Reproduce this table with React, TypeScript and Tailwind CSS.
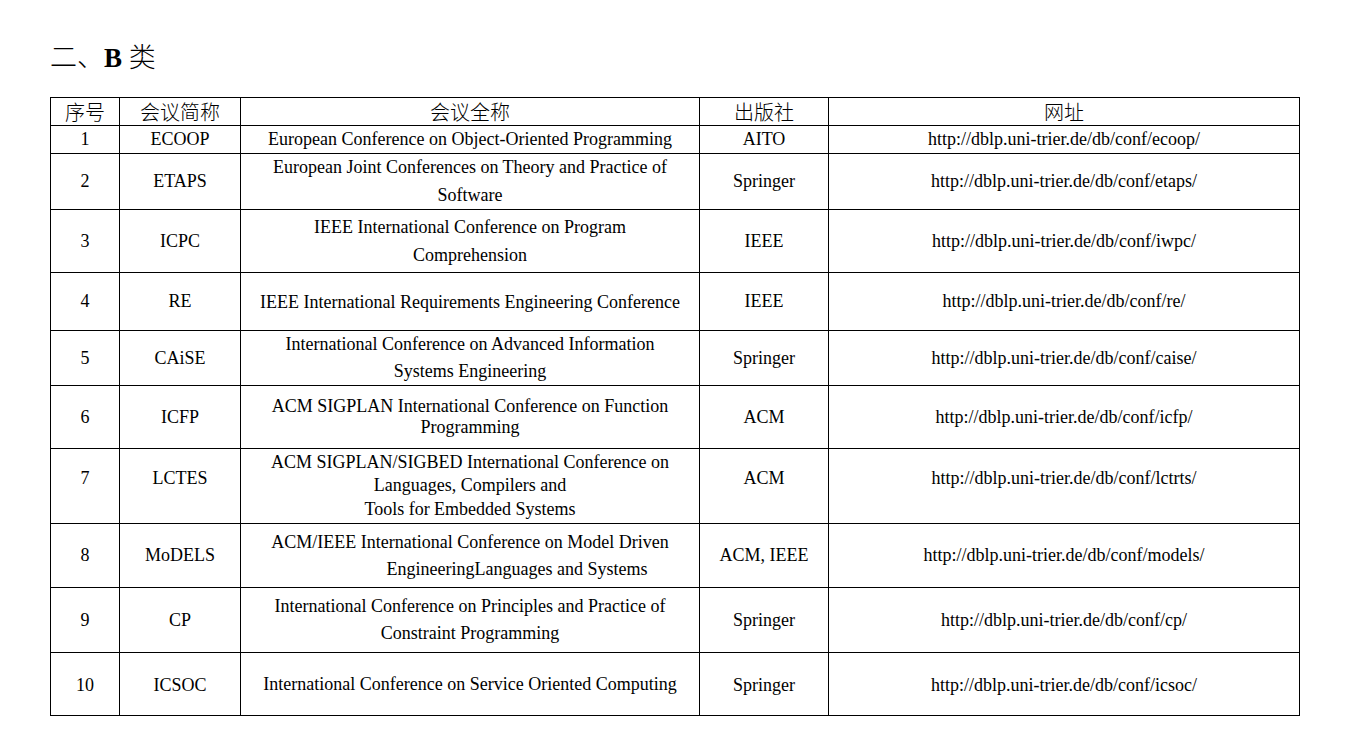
const rows = [
  { no: '1', abbr: 'ECOOP', full: ['European Conference on Object-Oriented Programming'], pub: 'AITO', url: 'http://dblp.uni-trier.de/db/conf/ecoop/', h: 'h-[27px]', lead: 'leading-[27px]' },
  { no: '2', abbr: 'ETAPS', full: ['European Joint Conferences on Theory and Practice of', 'Software'], pub: 'Springer', url: 'http://dblp.uni-trier.de/db/conf/etaps/', h: 'h-[56px]', lead: 'leading-[27.5px]' },
  { no: '3', abbr: 'ICPC', full: ['IEEE International Conference on Program', 'Comprehension'], pub: 'IEEE', url: 'http://dblp.uni-trier.de/db/conf/iwpc/', h: 'h-[63px]', lead: 'leading-[28px]' },
  { no: '4', abbr: 'RE', full: ['IEEE International Requirements Engineering Conference'], pub: 'IEEE', url: 'http://dblp.uni-trier.de/db/conf/re/', h: 'h-[58px]', lead: 'leading-[28px]' },
  { no: '5', abbr: 'CAiSE', full: ['International Conference on Advanced Information', 'Systems Engineering'], pub: 'Springer', url: 'http://dblp.uni-trier.de/db/conf/caise/', h: 'h-[54px]', lead: 'leading-[27px]' },
  { no: '6', abbr: 'ICFP', full: ['ACM SIGPLAN International Conference on Function', 'Programming'], pub: 'ACM', url: 'http://dblp.uni-trier.de/db/conf/icfp/', h: 'h-[63px]', lead: 'leading-[21px]' },
  { no: '7', abbr: 'LCTES', full: ['ACM SIGPLAN/SIGBED International Conference on', 'Languages, Compilers and', 'Tools for Embedded Systems'], pub: 'ACM', url: 'http://dblp.uni-trier.de/db/conf/lctrts/', h: 'h-[75px]', lead: 'leading-[23.5px]', side: 'pb-[16px]' },
  { no: '8', abbr: 'MoDELS', full: ['ACM/IEEE International Conference on Model Driven', 'EngineeringLanguages and Systems'], pub: 'ACM, IEEE', url: 'http://dblp.uni-trier.de/db/conf/models/', h: 'h-[64px]', lead: 'leading-[27px]', indent: true },
  { no: '9', abbr: 'CP', full: ['International Conference on Principles and Practice of', 'Constraint Programming'], pub: 'Springer', url: 'http://dblp.uni-trier.de/db/conf/cp/', h: 'h-[65px]', lead: 'leading-[27px]' },
  { no: '10', abbr: 'ICSOC', full: ['International Conference on Service Oriented Computing'], pub: 'Springer', url: 'http://dblp.uni-trier.de/db/conf/icsoc/', h: 'h-[63px]', lead: 'leading-[28px]', side: 'pt-[3px]' },
];

const serif = "font-['Liberation_Serif','Noto_Sans_CJK_SC',serif]";

export default function App() {
  return (
    <div className={`min-h-[750px] bg-white px-[50px] pt-[40px] text-black ${serif}`}>
      <h2 className="text-[27px] leading-[36px] mb-[21px] font-light">
        二、<span className="font-bold">B</span> 类
      </h2>

      <table className="w-[1249px] table-fixed border-collapse text-center text-[18px]">
        <colgroup>
          <col className="w-[69px]" />
          <col className="w-[121px]" />
          <col className="w-[459px]" />
          <col className="w-[129px]" />
          <col className="w-[471px]" />
        </colgroup>
        <thead>
          <tr className="h-[28px] text-[20px] leading-[26px] font-['Noto_Sans_CJK_SC',serif]">
            <th className="border border-black p-0 font-light">序号</th>
            <th className="border border-black p-0 font-light">会议简称</th>
            <th className="border border-black p-0 font-light">会议全称</th>
            <th className="border border-black p-0 font-light">出版社</th>
            <th className="border border-black p-0 font-light">网址</th>
          </tr>
        </thead>
        <tbody>
          {rows.map((r) => (
            <tr key={r.no} className={r.h}>
              <td className={`border border-black p-0 ${r.side || ''}`}>{r.no}</td>
              <td className={`border border-black p-0 ${r.side || ''}`}>{r.abbr}</td>
              <td className={`border border-black p-0 ${r.lead}`}>
                {r.full.map((line, i) => (
                  <div key={i} className={r.indent && i === 1 ? 'pl-[94px]' : ''}>{line}</div>
                ))}
              </td>
              <td className={`border border-black p-0 ${r.side || ''}`}>{r.pub}</td>
              <td className={`border border-black p-0 ${r.side || ''}`}>{r.url}</td>
            </tr>
          ))}
        </tbody>
      </table>
    </div>
  );
}
